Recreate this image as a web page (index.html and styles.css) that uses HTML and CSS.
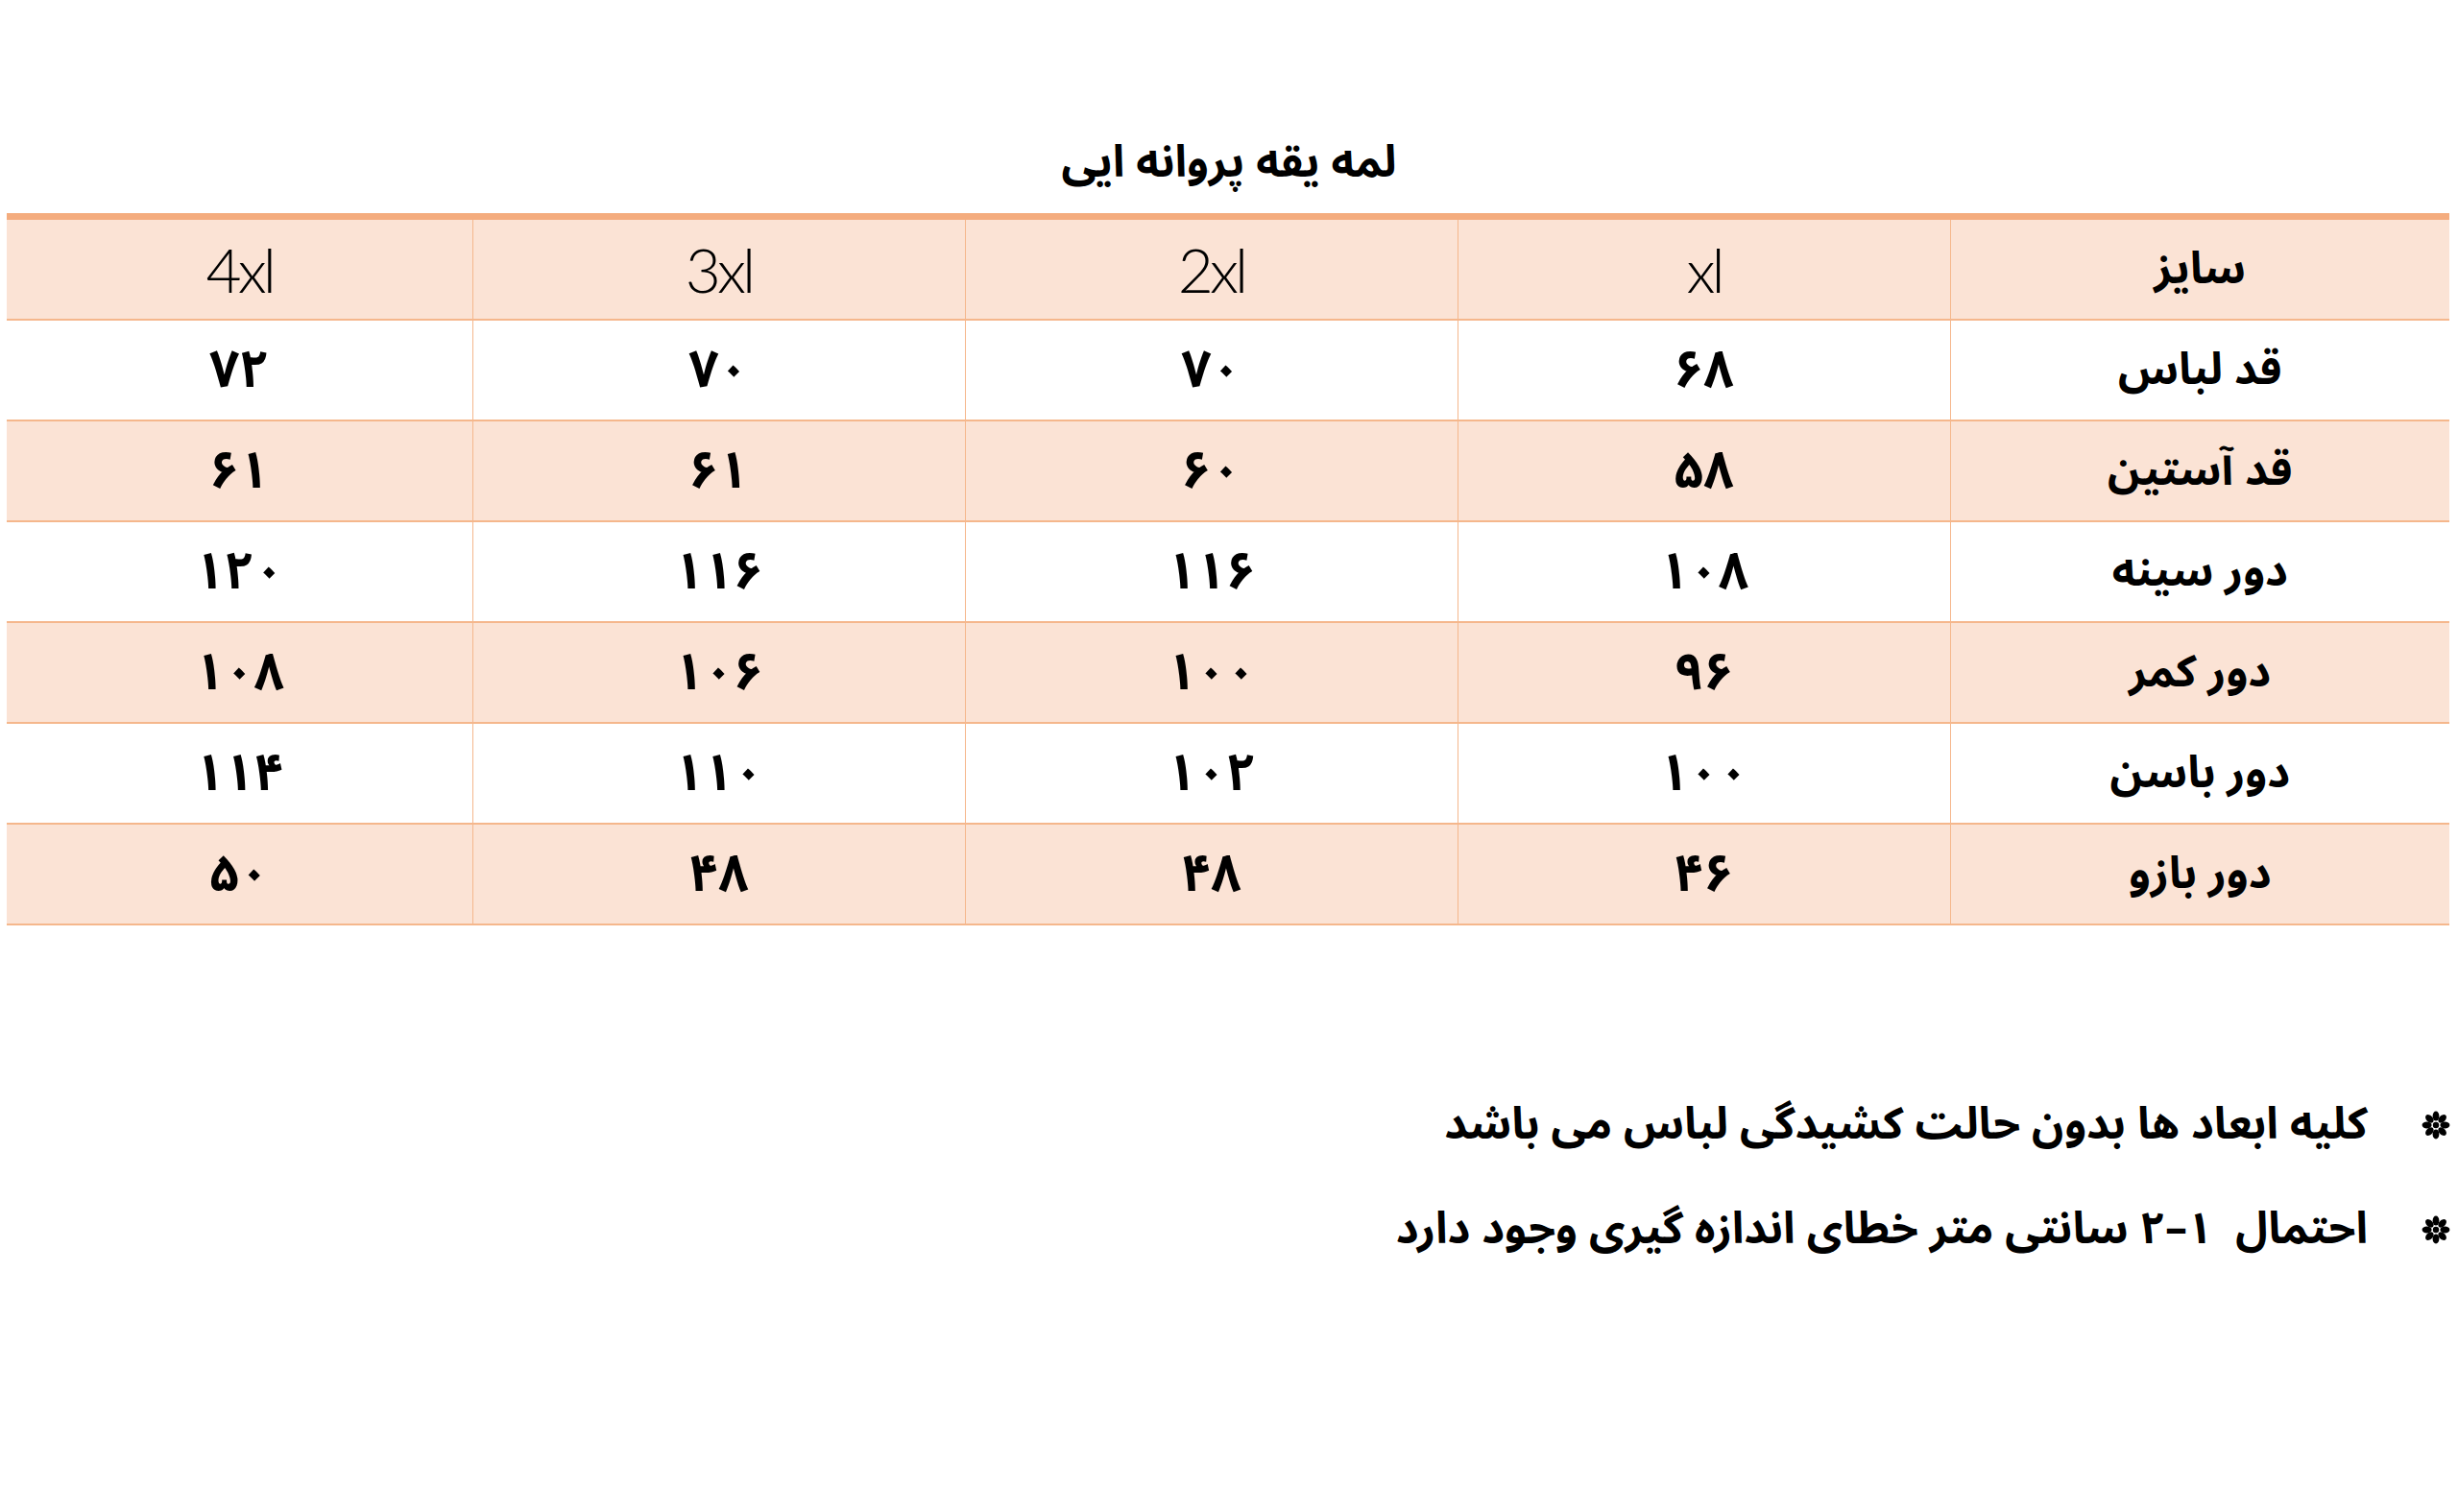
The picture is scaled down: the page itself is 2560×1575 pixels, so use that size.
FILE: index.html
```html
<!DOCTYPE html>
<html lang="fa" dir="rtl">
<head>
<meta charset="utf-8">
<title>لمه یقه پروانه ایی</title>
<link rel="stylesheet" href="styles.css">
</head>
<body>
<div class="page">
  <h1 class="title">لمه یقه پروانه ایی</h1>
  <table class="sizes">
    <colgroup>
      <col class="c-label">
      <col class="c-std">
      <col class="c-std">
      <col class="c-std">
      <col class="c-last">
    </colgroup>
    <thead>
      <tr class="shaded">
        <th class="fa">سایز</th>
        <th class="lat">xl</th>
        <th class="lat">2xl</th>
        <th class="lat">3xl</th>
        <th class="lat">4xl</th>
      </tr>
    </thead>
    <tbody>
      <tr>
        <td>قد لباس</td><td>۶۸</td><td>۷۰</td><td>۷۰</td><td>۷۲</td>
      </tr>
      <tr class="shaded">
        <td>قد آستین</td><td>۵۸</td><td>۶۰</td><td>۶۱</td><td>۶۱</td>
      </tr>
      <tr>
        <td>دور سینه</td><td>۱۰۸</td><td>۱۱۶</td><td>۱۱۶</td><td>۱۲۰</td>
      </tr>
      <tr class="shaded">
        <td>دور کمر</td><td>۹۶</td><td>۱۰۰</td><td>۱۰۶</td><td>۱۰۸</td>
      </tr>
      <tr>
        <td>دور باسن</td><td>۱۰۰</td><td>۱۰۲</td><td>۱۱۰</td><td>۱۱۴</td>
      </tr>
      <tr class="shaded">
        <td>دور بازو</td><td>۴۶</td><td>۴۸</td><td>۴۸</td><td>۵۰</td>
      </tr>
    </tbody>
  </table>
  <ul class="notes">
    <li class="note">
      <svg class="star" viewBox="0 0 30 30" aria-hidden="true">
        <g fill="#000">
          <circle cx="15" cy="15" r="3.2"/>
          <ellipse cx="15" cy="5.6" rx="3.4" ry="5"/>
          <ellipse cx="15" cy="5.6" rx="3.4" ry="5" transform="rotate(45 15 15)"/>
          <ellipse cx="15" cy="5.6" rx="3.4" ry="5" transform="rotate(90 15 15)"/>
          <ellipse cx="15" cy="5.6" rx="3.4" ry="5" transform="rotate(135 15 15)"/>
          <ellipse cx="15" cy="5.6" rx="3.4" ry="5" transform="rotate(180 15 15)"/>
          <ellipse cx="15" cy="5.6" rx="3.4" ry="5" transform="rotate(225 15 15)"/>
          <ellipse cx="15" cy="5.6" rx="3.4" ry="5" transform="rotate(270 15 15)"/>
          <ellipse cx="15" cy="5.6" rx="3.4" ry="5" transform="rotate(315 15 15)"/>
        </g>
      </svg>
      <span class="note-text">کلیه ابعاد ها بدون حالت کشیدگی لباس می باشد</span>
    </li>
    <li class="note">
      <svg class="star" viewBox="0 0 30 30" aria-hidden="true">
        <g fill="#000">
          <circle cx="15" cy="15" r="3.2"/>
          <ellipse cx="15" cy="5.6" rx="3.4" ry="5"/>
          <ellipse cx="15" cy="5.6" rx="3.4" ry="5" transform="rotate(45 15 15)"/>
          <ellipse cx="15" cy="5.6" rx="3.4" ry="5" transform="rotate(90 15 15)"/>
          <ellipse cx="15" cy="5.6" rx="3.4" ry="5" transform="rotate(135 15 15)"/>
          <ellipse cx="15" cy="5.6" rx="3.4" ry="5" transform="rotate(180 15 15)"/>
          <ellipse cx="15" cy="5.6" rx="3.4" ry="5" transform="rotate(225 15 15)"/>
          <ellipse cx="15" cy="5.6" rx="3.4" ry="5" transform="rotate(270 15 15)"/>
          <ellipse cx="15" cy="5.6" rx="3.4" ry="5" transform="rotate(315 15 15)"/>
        </g>
      </svg>
      <span class="note-text">احتمال&nbsp; ۱–۲ سانتی متر خطای اندازه گیری وجود دارد</span>
    </li>
  </ul>
</div>
</body>
</html>
```
FILE: styles.css
```css
html, body {
  margin: 0;
  padding: 0;
  background: #ffffff;
}

body {
  font-family: "Noto Sans Arabic", "DejaVu Sans", sans-serif;
  color: #000000;
}

.page {
  width: 2560px;
  padding-top: 135px;
}

.title {
  margin: 0;
  height: 87px;
  line-height: 70px;
  font-size: 46px;
  font-weight: 700;
  text-align: center;
}

.sizes {
  direction: rtl;
  margin: 0 9px 0 7px;
  width: 2544px;
  table-layout: fixed;
  border-collapse: collapse;
  border-spacing: 0;
}

.c-label { width: 520px; }
.c-std { width: 513px; }
.c-last { width: 485px; }

.sizes thead tr {
  border-top: 7px solid #f4ac7e;
}

.sizes th,
.sizes td {
  height: 103px;
  padding: 0;
  line-height: 1;
  text-align: center;
  vertical-align: middle;
  border-bottom: 2px solid #f5b78c;
  font-weight: 700;
  font-size: 54px;
}

.sizes th.fa,
.sizes td:first-child {
  font-size: 46px;
}

.sizes th:not(:last-child),
.sizes td:not(:last-child) {
  border-left: 1px solid #f5b78c;
}

.sizes .shaded {
  background: #fbe3d5;
}

.sizes th.lat {
  font-family: "Lato", "Open Sans", sans-serif;
  font-weight: 300;
  font-size: 64px;
  letter-spacing: -4px;
}

.notes {
  list-style: none;
  margin: 153px 0 0 0;
  padding: 0 8px 0 0;
  direction: rtl;
}

.note {
  display: flex;
  align-items: center;
  gap: 56px;
  height: 109px;
}

.star {
  width: 30px;
  height: 30px;
  flex: none;
}

.note-text {
  font-size: 46px;
  font-weight: 700;
}
```
